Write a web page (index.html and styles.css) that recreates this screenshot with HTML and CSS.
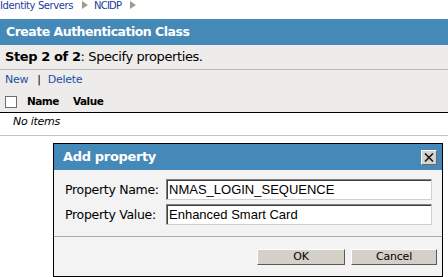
FILE: index.html
```html
<!DOCTYPE html>
<html>
<head>
<meta charset="utf-8">
<title>Create Authentication Class</title>
<link rel="stylesheet" href="styles.css">
</head>
<body>
<div class="crumbs">
  <a href="#" class="crumb">Identity Servers</a><span class="arrow"></span><a href="#" class="crumb crumb-short">NCIDP</a><span class="arrow"></span>
</div>
<div class="page-title">Create Authentication Class</div>
<div class="step"><b>Step 2 of 2</b>: Specify properties.</div>
<div class="list">
  <div class="actions"><a href="#" class="link">New</a><span class="sep">|</span><a href="#" class="link">Delete</a></div>
  <div class="thead"><span class="cb"></span><span class="col-name">Name</span><span class="col-value">Value</span></div>
  <div class="empty">No items</div>
</div>

<div class="dialog">
  <div class="dlg-title">
    <span>Add property</span>
    <span class="close"><svg width="10" height="9" viewBox="0 0 10 9"><path d="M1 0.5 L9 8.5 M9 0.5 L1 8.5" stroke="#1a1a1a" stroke-width="1.6" fill="none"/></svg></span>
  </div>
  <div class="dlg-body">
    <label class="lbl">Property Name:</label>
    <input class="field" type="text" value="NMAS_LOGIN_SEQUENCE">
    <label class="lbl">Property Value:</label>
    <input class="field" type="text" value="Enhanced Smart Card">
  </div>
  <div class="dlg-foot">
    <button class="btn btn-ok">OK</button>
    <button class="btn btn-cancel">Cancel</button>
  </div>
</div>
</body>
</html>
```
FILE: styles.css
```css
html, body {
  margin: 0;
  padding: 0;
}
body {
  width: 448px;
  height: 277px;
  overflow: hidden;
  position: relative;
  background: #fff;
  color: #000;
  font-family: "DejaVu Sans", Verdana, sans-serif;
}

.crumbs {
  height: 19px;
  display: flex;
  align-items: flex-start;
  font-size: 10px;
  line-height: 11px;
  letter-spacing: -0.4px;
}
.crumb {
  color: #1c3c9c;
  text-decoration: none;
}
.crumb-short {
  letter-spacing: -0.8px;
}
.arrow {
  width: 0;
  height: 0;
  border-left: 6px solid #a19d8e;
  border-top: 4px solid transparent;
  border-bottom: 4px solid transparent;
  margin: 1px 6px 0 9px;
}

.page-title {
  height: 26px;
  background: #4589b9;
  color: #fff;
  font-weight: bold;
  font-size: 12.5px;
  letter-spacing: -0.5px;
  line-height: 26px;
  padding-left: 6px;
}

.step {
  height: 24px;
  background: #eeecea;
  border-bottom: 1px solid #bdbdbd;
  font-size: 13px;
  letter-spacing: -0.4px;
  line-height: 24px;
  padding-left: 5px;
}

.list {
  background: #eeecea;
}
.actions {
  height: 20px;
  line-height: 20px;
  font-size: 11px;
  letter-spacing: -0.25px;
  padding-left: 5px;
}
.link {
  color: #1f4ea8;
  text-decoration: none;
}
.sep {
  margin: 0 7px 0 9px;
  color: #000;
}
.thead {
  height: 22px;
  display: flex;
  align-items: center;
  font-size: 10.5px;
  letter-spacing: -0.5px;
  font-weight: bold;
  border-bottom: 1px solid #000;
  padding-left: 5px;
}
.cb {
  width: 10px;
  height: 10px;
  background: #fff;
  border: 1px solid #6d6d6d;
  margin-right: 10px;
  margin-top: 2px;
}
.col-name {
  margin-right: 14px;
}
.empty {
  height: 22px;
  line-height: 18px;
  background: #fff;
  border-bottom: 1px solid #c3c3c3;
  font-size: 11px;
  letter-spacing: -0.25px;
  font-style: italic;
  padding-left: 13px;
}

.dialog {
  position: absolute;
  left: 53px;
  top: 143px;
  width: 388px;
  height: 132px;
  border: 1px solid #000;
  background: #f3f3f3;
}
.dlg-title {
  height: 26px;
  background: #4589b9;
  color: #fff;
  font-weight: bold;
  font-size: 13px;
  letter-spacing: -0.34px;
  line-height: 26px;
  padding: 0 5px 0 9px;
  display: flex;
  justify-content: space-between;
  align-items: center;
}
.close {
  width: 14px;
  height: 13px;
  background: #d6d3ce;
  border-top: 1px solid #fff;
  border-left: 1px solid #fff;
  border-right: 1px solid #6a6a6a;
  border-bottom: 1px solid #6a6a6a;
  display: flex;
  align-items: center;
  justify-content: center;
  margin-top: 1px;
}
.close svg {
  display: block;
}
.dlg-body {
  display: grid;
  grid-template-columns: 101px 266px;
  row-gap: 4px;
  align-items: center;
  padding: 9px 0 11px 11px;
  border-bottom: 1px solid #ababab;
}
.lbl {
  font-size: 12.5px;
  letter-spacing: -0.3px;
}
.field {
  box-sizing: border-box;
  width: 266px;
  height: 21px;
  margin: 0;
  padding: 0 2px;
  background: #fff;
  color: #000;
  font-family: "Liberation Sans", Arial, sans-serif;
  font-size: 13px;
  border-top: 1px solid #808080;
  border-left: 1px solid #808080;
  border-right: 1px solid #d4d0c8;
  border-bottom: 1px solid #d4d0c8;
  box-shadow: inset 1px 1px 0 #404040;
  outline: none;
}
.dlg-foot {
  display: flex;
  justify-content: flex-end;
  gap: 6px;
  padding: 12px 5px 0 0;
}
.btn {
  box-sizing: border-box;
  height: 16px;
  margin: 0;
  padding: 0;
  background: #d4d0c8;
  color: #000;
  font-family: "DejaVu Sans", Verdana, sans-serif;
  font-size: 11px;
  letter-spacing: -0.2px;
  line-height: 14px;
  border-top: 1px solid #fff;
  border-left: 1px solid #fff;
  border-right: 1px solid #5a5a5a;
  border-bottom: 1px solid #5a5a5a;
}
.btn-ok {
  width: 88px;
}
.btn-cancel {
  width: 86px;
}
```
